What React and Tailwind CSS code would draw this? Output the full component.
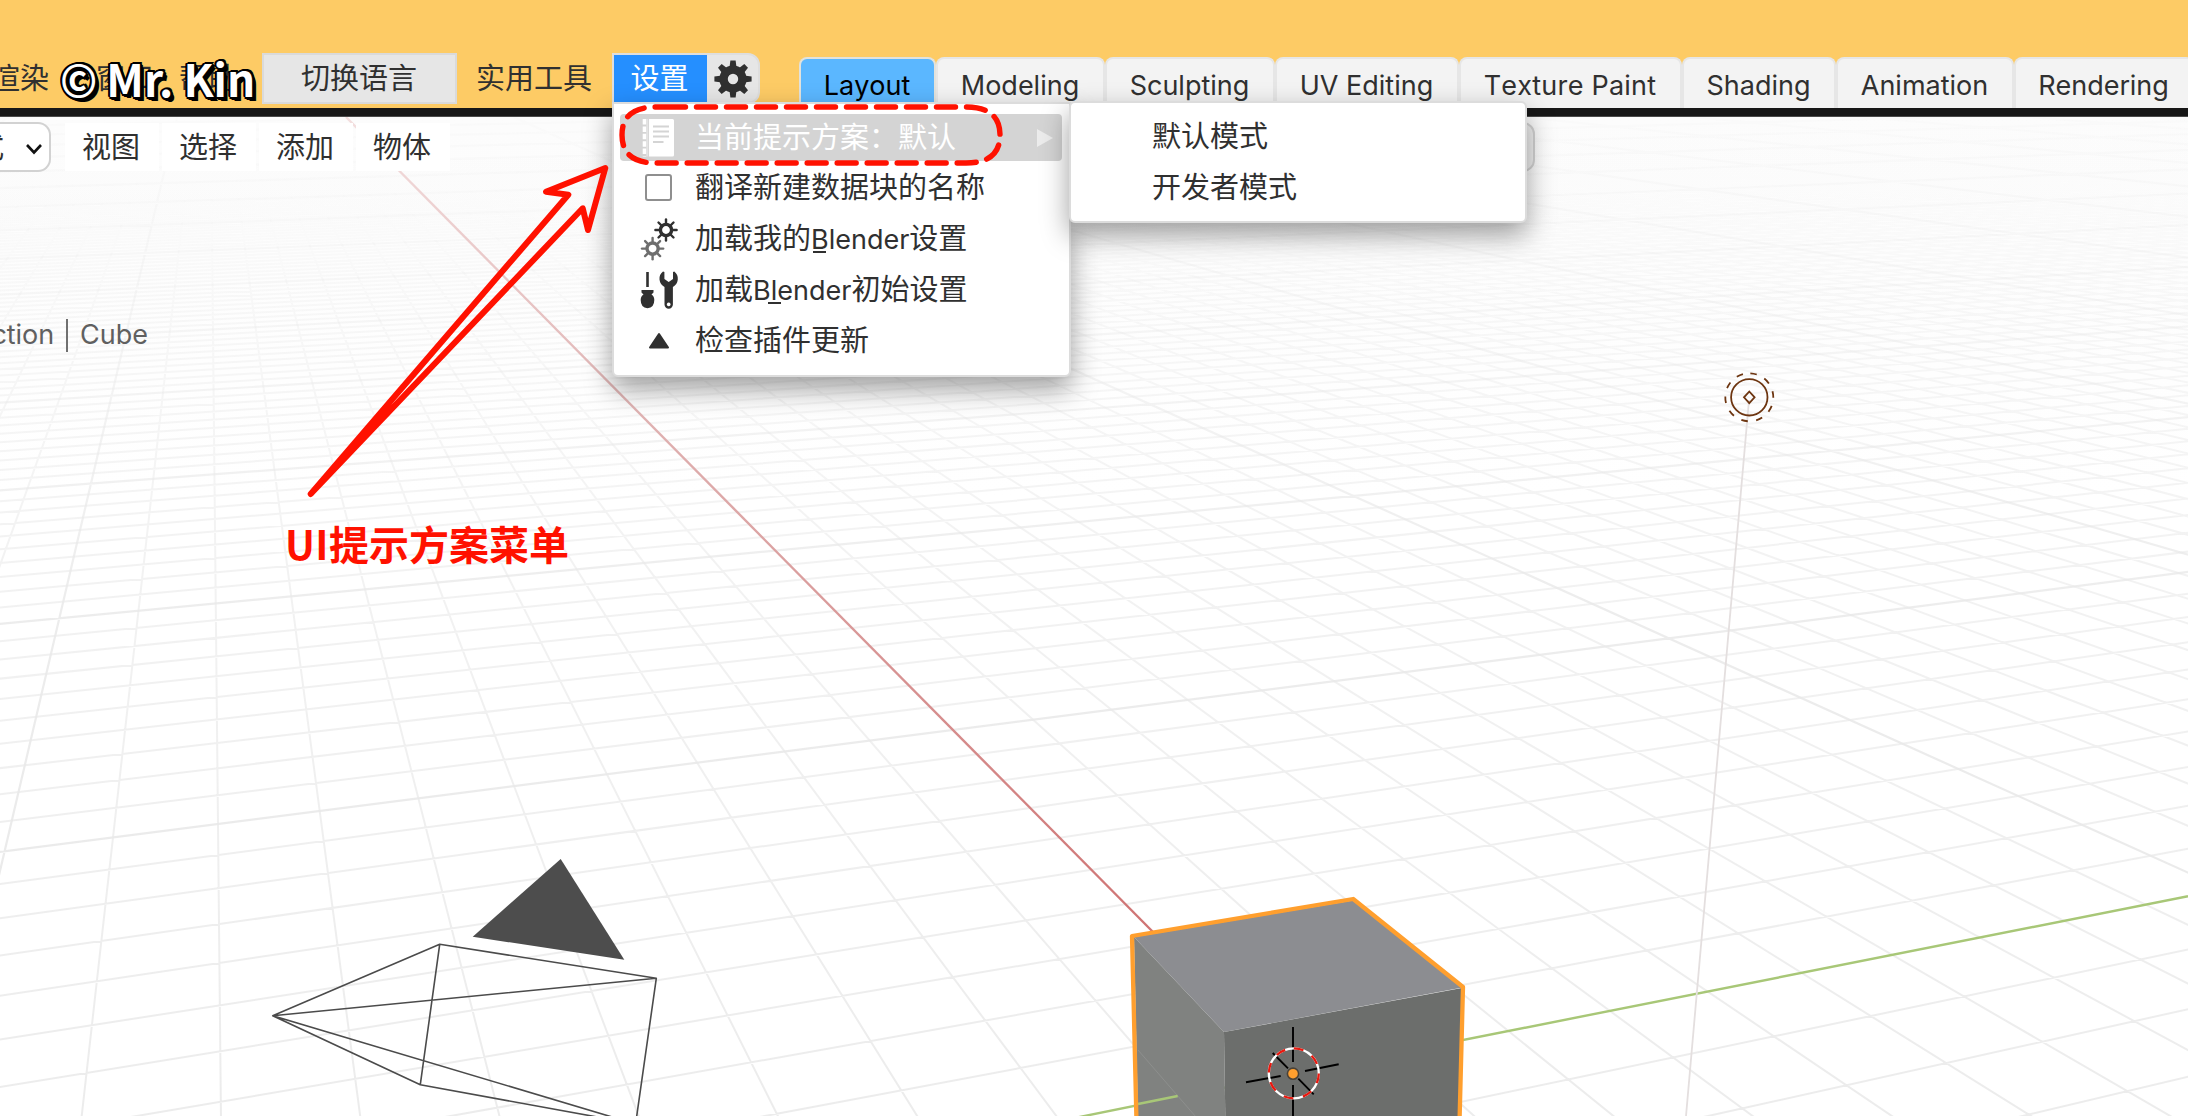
import React from "react";

const FONT = "font-['Inter','Noto_Sans_CJK_SC',sans-serif] [font-kerning:none]";

/* ---------- viewport projection ---------- */
const CX = 1293;
const CY = 1073.7;
const FOCAL = 2188;
const DIST = 17.85;
const SA = 0.405;
const CA = 0.9143;
const SP = 0.4472;
const CP = 0.8944;

const depth = (x, y) => DIST - (CP * CA * x - CP * SA * y);
const project = (x, y) => {
  const k = FOCAL / depth(x, y);
  return [CX + k * (SA * x + CA * y), CY - k * (-SP * CA * x + SP * SA * y)];
};

function clipped(a, b) {
  const near = 2;
  let [p, q] = [a, b];
  const dp = depth(...p);
  const dq = depth(...q);
  if (dp < near && dq < near) return null;
  const mix = (t) => [a[0] + (b[0] - a[0]) * t, a[1] + (b[1] - a[1]) * t];
  if (dp < near) p = mix((near - dp) / (dq - dp));
  if (dq < near) q = mix((near - dp) / (dq - dp));
  return [project(...p), project(...q)];
}

function gridPath(step, range, skip) {
  let d = "";
  for (let i = -range; i <= range; i += step) {
    if (i === 0 || (skip && i % skip === 0)) continue;
    for (const seg of [
      clipped([i, -range], [i, range]),
      clipped([-range, i], [range, i]),
    ]) {
      if (!seg) continue;
      const [[x1, y1], [x2, y2]] = seg;
      d += `M${x1.toFixed(1)} ${y1.toFixed(1)}L${x2.toFixed(1)} ${y2.toFixed(1)}`;
    }
  }
  return d;
}

const FINE = gridPath(1, 110, 10);
const COARSE = gridPath(10, 400);

function Scene() {
  return (
    <svg className="absolute inset-0" width="2188" height="1116" viewBox="0 0 2188 1116" fill="none">
      <defs>
        <linearGradient id="fine" gradientUnits="userSpaceOnUse" x1="0" y1="117" x2="0" y2="1116">
          <stop offset="0" stopColor="#ececec" stopOpacity="0" />
          <stop offset="0.07" stopColor="#ececec" stopOpacity="0.07" />
          <stop offset="0.2" stopColor="#ececec" stopOpacity="0.38" />
          <stop offset="0.45" stopColor="#ececec" stopOpacity="0.68" />
          <stop offset="1" stopColor="#ececec" stopOpacity="1" />
        </linearGradient>
        <linearGradient id="coarse" gradientUnits="userSpaceOnUse" x1="0" y1="117" x2="0" y2="1116">
          <stop offset="0" stopColor="#e9e9e9" stopOpacity="0.1" />
          <stop offset="0.2" stopColor="#e9e9e9" stopOpacity="0.4" />
          <stop offset="0.5" stopColor="#e9e9e9" stopOpacity="0.85" />
          <stop offset="1" stopColor="#e9e9e9" />
        </linearGradient>
        <linearGradient id="haze" x1="0" y1="0" x2="0" y2="1">
          <stop offset="0" stopColor="#fbfbfb" />
          <stop offset="1" stopColor="#ffffff" />
        </linearGradient>
        <linearGradient id="red" gradientUnits="userSpaceOnUse" x1="0" y1="117" x2="0" y2="930">
          <stop offset="0" stopColor="#f3dede" />
          <stop offset="0.35" stopColor="#e0b4b4" />
          <stop offset="1" stopColor="#cf7373" />
        </linearGradient>
      </defs>
      <rect width="2188" height="500" fill="url(#haze)" />
      <path d={FINE} stroke="url(#fine)" strokeWidth="2" />
      <path d={COARSE} stroke="url(#coarse)" strokeWidth="2.2" />
      <path d="M346 117L1153 932" stroke="url(#red)" strokeWidth="2.4" />
      <path d="M1050 1123L1293 1073.7L2188 896.3" stroke="#a8c777" strokeWidth="2.4" />

      {/* lamp */}
      <path d="M1749 400L1686 1116" stroke="#e4dfdf" strokeWidth="1.8" />
      <g stroke="#6d3510" strokeWidth="1.8">
        <circle cx="1749.3" cy="397.3" r="18.2" />
        <circle cx="1749.3" cy="397.3" r="24" strokeDasharray="6.6 8.48" transform="rotate(-87.5 1749.3 397.3)" />
        <path d="M1749.3 391.5l5.3 5.8l-5.3 5.8l-5.3-5.8z" />
      </g>

      {/* camera */}
      <path d="M560.7 859L472.7 936.7L624.3 959.8z" fill="#4d4d4d" />
      <path
        d="M272.7 1015.7L439.7 944.3L656.3 978.3L272.7 1015.7L420.3 1084.7L635.6 1124L272.7 1015.7M439.7 944.3L420.3 1084.7M656.3 978.3L635.6 1124"
        stroke="#4b4b4b" strokeWidth="1.6" strokeLinejoin="round"
      />

      {/* cube */}
      <path d="M1134 937L1353 900.5L1462.5 987.5L1224 1032z" fill="#8c8d91" />
      <path d="M1134 937L1224 1032L1225.3 1117H1138z" fill="#808280" />
      <path d="M1224 1032L1462 988L1458.5 1117H1225.3z" fill="#6c6e6c" />
      <path d="M1138 1050L1196 1117" stroke="#8d8f8d" strokeWidth="1" />
      <path d="M1138 1104L1177.7 1096" stroke="#a8c777" strokeWidth="2.6" />
      <path d="M1136.5 1122L1132 936L1353.2 899L1463 987L1459.5 1122" stroke="#ff9f2e" strokeWidth="4.3" strokeLinejoin="round" />

      {/* 3D cursor */}
      <path
        d="M1293 1027V1062M1293 1085V1116M1305 1071L1338.7 1064.3M1246 1082.3L1280.7 1076M1272.7 1053L1288 1068.3M1298.3 1078.7L1313.7 1094.3"
        stroke="#000" strokeWidth="1.9"
      />
      <circle cx="1293.8" cy="1073.3" r="25" stroke="#fff" strokeWidth="2.3" />
      <circle cx="1293.8" cy="1073.3" r="25" stroke="#e8190f" strokeWidth="2.3" strokeDasharray="9.817 9.817" transform="rotate(-90 1293.8 1073.3)" />
      <circle cx="1293" cy="1073.7" r="5.6" fill="#ff9f2e" stroke="#4a4238" strokeWidth="1.6" />
    </svg>
  );
}

/* ---------- icons ---------- */
function GearIcon() {
  return (
    <svg width="38" height="38" viewBox="-19 -19 38 38">
      <g fill="#303030">
        {[0, 45, 90, 135, 180, 225, 270, 315].map((a) => (
          <path key={a} d="M-3.6 -11L-2.6 -18.6H2.6L3.6 -11z" transform={`rotate(${a})`} />
        ))}
      </g>
      <circle r="9.4" fill="none" stroke="#303030" strokeWidth="8.4" />
    </svg>
  );
}

function NotebookIcon() {
  return (
    <svg width="38" height="40" viewBox="0 0 38 40">
      <path d="M9 1H32.5Q34 1 34 2.5V37Q34 38.500 32.500 38.500H9z" fill="#fff" />
      <path d="M4.500 1V38.500" stroke="#fff" strokeWidth="3.600" strokeDasharray="5.5 1.900" />
      <path d="M13 8.500H29M13 13.500H29M13 18.500H29M13 24H23.500" stroke="#d4d4d4" strokeWidth="1.800" />
      <path d="M7.300 1V38.500" stroke="#e4e4e4" strokeWidth="1.800" />
    </svg>
  );
}

function CheckboxIcon() {
  return <span className="size-[27px] rounded-[3px] border-2 border-[#8f8f8f] bg-white" />;
}

function SmallGear({ x, y, color }) {
  return (
    <g transform={`translate(${x} ${y})`} stroke={color} fill="none">
      <circle r="5.600" strokeWidth="3.400" />
      {[0, 45, 90, 135, 180, 225, 270, 315].map((a) => (
        <path key={a} d="M0 -6V-10.600" strokeWidth="2.400" strokeLinecap="round" transform={`rotate(${a})`} />
      ))}
    </g>
  );
}

function GearsIcon() {
  return (
    <svg width="40" height="44" viewBox="0 0 40 44">
      <SmallGear x={13.6} y={31.6} color="#6e6e6e" />
      <SmallGear x={27} y={13} color="#303030" />
    </svg>
  );
}

function ToolsIcon() {
  return (
    <svg width="40" height="40" viewBox="0 0 40 40">
      <path d="M8.500 2V17" stroke="#303030" strokeWidth="2.600" />
      <path
        d="M2.500 20H14.500V22.500L12.500 24.500Q15.300 26 15.300 30Q15.300 37.800 8.500 38.200Q1.700 37.800 1.700 30Q1.700 26 4.500 24.500L2.500 22.500z"
        fill="#303030"
      />
      <path
        fillRule="evenodd"
        d="M24 1.500Q20 4.500 20.500 9.500Q21 14.500 25.500 17V34.500A4.200 4.200 0 0 0 33.900 34.500V17Q38.300 14.500 38.800 9.500Q39.200 4.500 35.300 1.500L34 2V9L29.700 12L25.400 9V2zM29.700 32.500A1.900 1.900 0 1 1 29.690 32.500z"
        fill="#303030"
      />
    </svg>
  );
}

function TriangleIcon() {
  return (
    <svg width="24" height="18" viewBox="0 0 24 18">
      <path d="M12 2L21 15.500H3z" fill="#303030" stroke="#303030" strokeWidth="2" strokeLinejoin="round" />
    </svg>
  );
}

/* ---------- top bar ---------- */
function Watermark() {
  return (
    <div className="absolute left-[60px] top-[49px] flex items-center gap-[9px] whitespace-nowrap font-['Noto_Sans_CJK_SC',sans-serif] text-[44px] font-bold leading-[58px] text-white [font-kerning:normal] [text-shadow:-2px_0_0_#000,2px_0_0_#000,0_-2px_0_#000,0_2px_0_#000,-2px_-1px_0_#000,2px_-2px_0_#000,-1px_2px_0_#000,2px_2px_0_#000,3px_1px_0_#000,1px_3px_0_#000,3px_3px_0_#000,4px_4px_0_#000]">
      <span>©</span>
      <span>Mr. Kin</span>
    </div>
  );
}

const TABS = [
  ["Layout", "w-[137px]"],
  ["Modeling", "w-[169px]"],
  ["Sculpting", "w-[170px]"],
  ["UV Editing", "w-[184px]"],
  ["Texture Paint", "w-[223px] tracking-[0.2px]"],
  ["Shading", "w-[154px]"],
  ["Animation", "w-[178px]"],
  ["Rendering", "w-[180px]"],
];

function TopBar() {
  return (
    <header className="relative flex h-[108px] items-end bg-[#fdcb65]">
      <nav className="mb-[4px] flex h-[51px] w-[612px] shrink-0 items-center text-[29px] text-[#303030]">
        <span className="-ml-[9px] w-[105px] shrink-0 pt-[1px]">渲染</span>
        <span className="w-[83px] shrink-0">窗口</span>
        <span className="w-[83px] shrink-0">帮助</span>
        <button className="flex h-[51px] w-[195px] shrink-0 items-center justify-center border-2 border-[#dadada] bg-[#e6e6e6] pr-[1px] pt-[1px]">切换语言</button>
        <span className="ml-[19px] shrink-0 pt-[1px]">实用工具</span>
      </nav>
      <div className="mb-[4px] flex h-[51px] w-[148px] shrink-0 overflow-hidden rounded-r-[12px] border-2 border-[#dedede] bg-[#e6e6e6]">
        <button className="flex w-[93px] items-center justify-center bg-[#258fff] pr-[2px] text-[29px] text-white">设置</button>
        <span className="flex w-[51px] items-center justify-center"><GearIcon /></span>
      </div>
      <div className="ml-[39px] flex h-[51px] shrink-0">
        {TABS.map(([label, width], i) => (
          <button
            key={label}
            className={`${width} flex shrink-0 justify-center rounded-t-[8px] border-2 border-b-0 pr-[1px] pt-[3px] text-[27px] leading-[48px] ${
              i === 0 ? "border-[#e2e2dc] bg-[#5bb7ff] text-black" : "border-[#e6e6e6] bg-[#f3f3f3] text-[#303030]"
            }`}
          >
            {label}
          </button>
        ))}
      </div>
      <Watermark />
    </header>
  );
}

/* ---------- viewport header ---------- */
function ViewportHeader() {
  return (
    <div className="relative flex h-[50px] items-center text-[29px] text-[#303030]">
      <div className="flex h-[50px] w-[51px] shrink-0 items-center overflow-hidden rounded-r-[13px] border-2 border-l-0 border-[#d2d2d2] bg-white">
        <span className="-ml-[25px] w-[50px] shrink-0 pt-[1px]">式</span>
        <svg width="18" height="12" viewBox="0 0 18 12" fill="none" className="mt-[3px] shrink-0">
          <path d="M2 2L9 9.500L16 2" stroke="#111" strokeWidth="2.600" />
        </svg>
      </div>
      <div className="ml-[14px] flex gap-[3px]">
        {["视图", "选择", "添加", "物体"].map((t) => (
          <span key={t} className="flex h-[48px] w-[94px] items-center justify-center bg-white pr-[2px] pt-[2px]">{t}</span>
        ))}
      </div>
      <span className="ml-[995px] h-[50px] w-[90px] rounded-[12px] border-2 border-[#d4d4d4] bg-[#f0f0f0]" />
    </div>
  );
}

/* ---------- menus ---------- */
function Latin({ children }) {
  return <span className="text-[27px]">{children}</span>;
}

function MenuRow({ icon, active, children }) {
  return (
    <div className={`flex h-[47px] items-center whitespace-nowrap rounded-[4px] text-[29px] ${active ? "bg-[#d4d4d4] text-white" : "-mt-[1px] mb-[1px] text-[#303030]"}`}>
      <span className="flex w-[75px] shrink-0 items-center justify-center pl-[2px]">{icon}</span>
      <span className="flex-1 leading-[47px]">{children}</span>
      {active && (
        <svg width="16" height="18" viewBox="0 0 16 18" className="mr-[9px]">
          <path d="M0 0L16 9L0 18z" fill="#ececec" />
        </svg>
      )}
    </div>
  );
}

function SettingsMenu() {
  return (
    <div className="absolute left-[612px] top-[102px] flex h-[275px] w-[459px] flex-col gap-[4px] rounded-[6px] rounded-t-none border-2 border-[#dcdcdc] bg-white pl-[6px] pr-[7px] pt-[10px] shadow-[0_12px_28px_rgba(0,0,0,0.38)]">
      <MenuRow active icon={<NotebookIcon />}>当前提示方案：默认</MenuRow>
      <MenuRow icon={<CheckboxIcon />}>翻译新建数据块的名称</MenuRow>
      <MenuRow icon={<GearsIcon />}>
        加载我的
        <Latin>
          <span className="relative">B<span className="absolute left-[2px] top-[28px] h-[2px] w-[13px] bg-[#303030]" /></span>lender
        </Latin>
        设置
      </MenuRow>
      <MenuRow icon={<ToolsIcon />}>
        加载
        <Latin>
          B<span className="relative">l<span className="absolute -left-[3px] top-[28px] h-[2px] w-[13px] bg-[#303030]" /></span>ender
        </Latin>
        初始设置
      </MenuRow>
      <MenuRow icon={<TriangleIcon />}>检查插件更新</MenuRow>
    </div>
  );
}

function SubMenu() {
  return (
    <div className="absolute left-[1069px] top-[101px] flex h-[122px] w-[458px] flex-col gap-[4px] rounded-[6px] border-2 border-[#dcdcdc] bg-white pl-[81px] pt-[10px] text-[29px] text-[#303030] shadow-[0_12px_28px_rgba(0,0,0,0.38)]">
      <span className="h-[47px] leading-[47px]">默认模式</span>
      <span className="h-[47px] leading-[47px]">开发者模式</span>
    </div>
  );
}

function Annotations() {
  return (
    <>
      <svg className="absolute inset-0" width="2188" height="600" viewBox="0 0 2188 600" fill="none" stroke="#ff1100" strokeLinejoin="round" strokeLinecap="round">
        <path d="M310.700 494L568.300 194.700L546 191.700L605.300 168L588 230L582.700 208.300z" strokeWidth="6" />
        <path d="M666.500 107H966Q1000 107 1000 135T966 163H656Q622 163 622 135T656 107H666.500" strokeWidth="5.400" strokeDasharray="19 11" />
      </svg>
      <div className="absolute left-[285px] top-[513px] whitespace-nowrap font-['Noto_Sans_CJK_SC',sans-serif] text-[40px] font-bold leading-[60px] text-[#ff1100]">
        <span className="tracking-[0.4px]">UI</span>提示方案菜单
      </div>
    </>
  );
}

export default function App() {
  return (
    <div className={`relative h-[1116px] w-[2188px] overflow-hidden bg-white ${FONT}`}>
      <Scene />
      <TopBar />
      <div className="relative h-[9px] border-b border-[#4a4a4a] bg-[#171717]" />
      <main className="relative pt-[5px]">
        <ViewportHeader />
        <p className="-ml-[12px] mt-[141px] flex h-[44px] items-center whitespace-nowrap text-[27px] text-[#606060]">
          <span className="w-[66px] shrink-0 text-right tracking-[-0.1px]">ction</span>
          <span className="mx-[12px] h-[33px] w-[2px] bg-[#707070]" />
          <span>Cube</span>
        </p>
      </main>
      <SettingsMenu />
      <SubMenu />
      <Annotations />
    </div>
  );
}
